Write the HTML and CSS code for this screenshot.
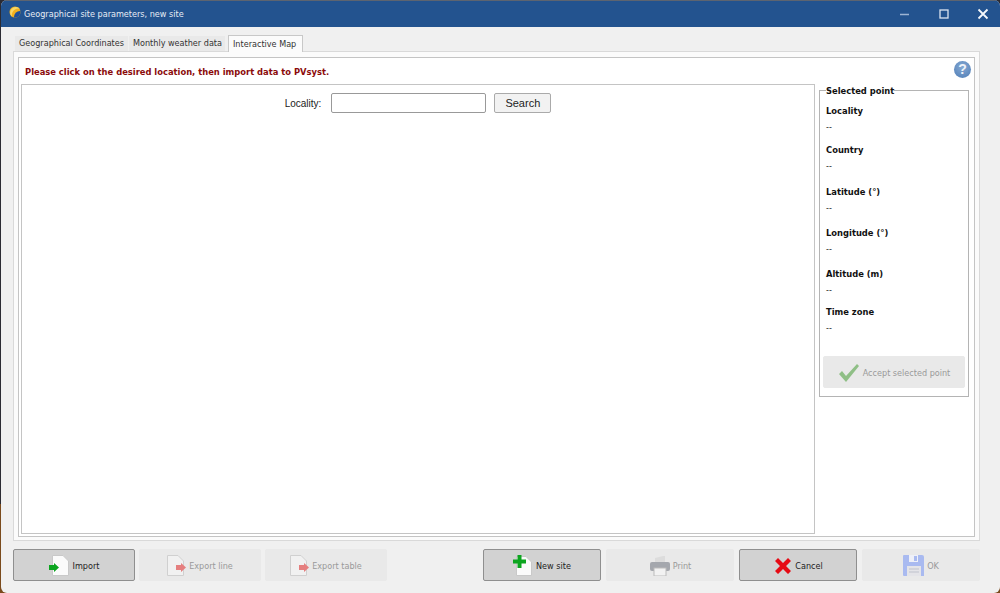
FILE: index.html
```html
<!DOCTYPE html>
<html lang="en">
<head>
  <meta charset="UTF-8" />
  <title>Geographical site parameters, new site</title>
  <link rel="stylesheet" href="styles.css">
</head>
<body>
  <div class="window">

    <header class="titlebar">
      <svg class="app-icon" width="12" height="12" viewBox="0 0 12 12">
        <circle cx="6" cy="6" r="5.5" fill="#f2b01e"/>
        <path d="M3 11 A5.5 5.5 0 0 1 11 2.5 A7 7 0 0 0 3 11 Z" fill="#f7d768"/>
        <path d="M5 11.4 A5.5 5.5 0 0 0 11.4 5 A6 6 0 0 0 5 11.4 Z" fill="#1d4f9c"/>
      </svg>
      <span class="title-text">Geographical site parameters, new site</span>
      <div class="win-controls">
        <svg width="12" height="12" viewBox="0 0 12 12"><path d="M1 6.5H10" stroke="#9db4d3" stroke-width="1.4"/></svg>
        <svg width="12" height="12" viewBox="0 0 12 12"><rect x="2" y="2" width="8" height="8" fill="none" stroke="#dbe4f0" stroke-width="1.3"/></svg>
        <svg width="12" height="12" viewBox="0 0 12 12"><path d="M1.5 1.5L10.5 10.5M10.5 1.5L1.5 10.5" stroke="#f4f7fb" stroke-width="1.8"/></svg>
      </div>
    </header>

    <main class="content">
      <nav class="tabs">
        <div class="tab">Geographical Coordinates</div>
        <div class="tab second">Monthly weather data</div>
        <div class="tab active">Interactive Map</div>
      </nav>

      <section class="tab-panel">
        <div class="inner">
          <div class="notice-row">
            <p class="notice">Please click on the desired location, then import data to PVsyst.</p>
            <div class="help">?</div>
          </div>
          <div class="work">
            <div class="map">
              <div class="search">
                <label class="search-label" for="locality">Locality:</label>
                <input class="search-input" id="locality" type="text">
                <button class="search-btn">Search</button>
              </div>
            </div>
            <fieldset class="point">
              <legend>Selected point</legend>
              <div class="field"><b>Locality</b><span>--</span></div>
              <div class="field tall"><b>Country</b><span>--</span></div>
              <div class="field mid"><b>Latitude (°)</b><span>--</span></div>
              <div class="field mid"><b>Longitude (°)</b><span>--</span></div>
              <div class="field short"><b>Altitude (m)</b><span>--</span></div>
              <div class="field"><b>Time zone</b><span>--</span></div>
              <div class="btn accept disabled">
                <svg width="22" height="20" viewBox="0 0 22 20"><path d="M1 11L4 8L8 13L19 1L21 3L8 19Z" fill="#8fbf86"/></svg>
                Accept selected point
              </div>
            </fieldset>
          </div>
        </div>
      </section>

      <footer class="actions">
        <div class="btn-group left">
          <div class="btn w122">
            <svg width="20" height="21" viewBox="0 0 20 21"><path d="M3.5 0.5H14L19.5 6V20.5H3.5Z" fill="#fbfbfb" stroke="#c9c9c9"/><path d="M0 10H5V8L10 12.5L5 17V15H0Z" fill="#0ca51f"/></svg>
            Import
          </div>
          <div class="btn w122 disabled">
            <svg width="19" height="21" viewBox="0 0 19 21"><path d="M0.5 0.5H11L16.5 6V20.5H0.5Z" fill="#f1f1f1" stroke="#d0d0d0"/><path d="M9 10H14V8L19 12.5L14 17V15H9Z" fill="#e57f7f"/></svg>
            Export line
          </div>
          <div class="btn w122 disabled">
            <svg width="19" height="21" viewBox="0 0 19 21"><path d="M0.5 0.5H11L16.5 6V20.5H0.5Z" fill="#f1f1f1" stroke="#d0d0d0"/><path d="M9 10H14V8L19 12.5L14 17V15H9Z" fill="#e57f7f"/></svg>
            Export table
          </div>
        </div>
        <div class="btn-group right">
          <div class="btn w118">
            <svg width="19" height="21" viewBox="0 0 19 21"><path d="M3.5 1.5H13L18.5 7V20.5H3.5Z" fill="#fbfbfb" stroke="#c9c9c9"/><path d="M4.5 0H8.5V4.5H13V8.5H8.5V13H4.5V8.5H0V4.5H4.5Z" fill="#0ca51f"/></svg>
            New site
          </div>
          <div class="btn w128 print disabled">
            <svg width="20" height="20" viewBox="0 0 20 20"><path d="M5 7V2L13 0H15V7Z" fill="#dcdcdc"/><rect x="0" y="6" width="20" height="9" rx="2" fill="#a4a7ad"/><rect x="4" y="12" width="12" height="8" fill="#f2f2f2" stroke="#bcbcbc"/></svg>
            Print
          </div>
          <div class="btn w118 cancel">
            <svg width="16" height="16" viewBox="0 0 16 16"><path d="M3 0L8 5L13 0L16 3L11 8L16 13L13 16L8 11L3 16L0 13L5 8L0 3Z" fill="#e60a14"/></svg>
            Cancel
          </div>
          <div class="btn w118 ok disabled">
            <svg width="21" height="21" viewBox="0 0 21 21"><path d="M1 0H19A2 2 0 0 1 21 2V21H1A1 1 0 0 1 0 20V1A1 1 0 0 1 1 0Z" fill="#a9baf0"/><rect x="6" y="0" width="9" height="7" fill="#eef0f8"/><rect x="11" y="1" width="3" height="5" fill="#a9baf0"/><rect x="4" y="11" width="14" height="10" fill="#e4e4e8"/><path d="M6 14H16M6 17H16" stroke="#bfc2cc"/></svg>
            OK
          </div>
        </div>
      </footer>
    </main>

  </div>
</body>
</html>
```

FILE: styles.css
```css
html, body {
  margin: 0;
  height: 100%;
}

body {
  background: linear-gradient(#2b2b33 85%, #7a4a1c 85%);
  font-family: 'DejaVu Sans Condensed', 'DejaVu Sans', sans-serif;
  font-size: 9px;
  color: #222;
  overflow: hidden;
}

.window {
  height: 593px;
  margin-left: 1px;
  display: flex;
  flex-direction: column;
  border-radius: 6px;
  overflow: hidden;
  background-color: #f0f0f0;
}

.titlebar {
  height: 27px;
  box-sizing: border-box;
  border-top: 1px solid #5d6470;
  background-color: #23538f;
  color: #e6ecf5;
  display: flex;
  align-items: center;
  padding-left: 8px;
  flex-shrink: 0;
}

.app-icon {
  margin-top: -5px;
  margin-right: 3px;
}

.win-controls {
  margin-left: auto;
  display: flex;
  gap: 27px;
  padding-right: 11px;
}

.content {
  flex: 1;
  display: flex;
  flex-direction: column;
  padding: 7px 20px 12px 12px;
}

.tabs {
  display: flex;
  height: 17px;
  align-items: flex-end;
  padding-left: 2px;
}

.tab {
  height: 15px;
  line-height: 15px;
  padding: 0 4px;
  background-color: #e9e9e9;
  margin-right: 1px;
  color: #333;
}

.tab.second {
  margin-right: 3px;
  padding-right: 3px;
}

.tab.active {
  height: 17px;
  line-height: 16px;
  padding-right: 6px;
  background-color: #fbfbfb;
  border: 1px solid #c8c8c8;
  border-bottom: none;
  margin-right: 0;
  margin-bottom: -1px;
  box-sizing: border-box;
  position: relative;
}

.tab-panel {
  height: 490px;
  box-sizing: border-box;
  border: 1px solid #d9d9d9;
  background-color: #fbfbfb;
  padding: 5px 4px 3px 4px;
}

.inner {
  height: 100%;
  box-sizing: border-box;
  border: 1px solid #c4c4c4;
  background-color: white;
  padding: 0 2px 2px 2px;
  display: flex;
  flex-direction: column;
}

.notice-row {
  height: 26px;
  flex-shrink: 0;
  display: flex;
  align-items: flex-start;
  justify-content: space-between;
}

.notice {
  margin: 8px 0 0 4px;
  color: #8b0b0b;
  font-weight: bold;
  font-size: 9.3px;
}

.help {
  width: 17px;
  height: 17px;
  margin: 3px 1px 0 0;
  border-radius: 50%;
  background: radial-gradient(circle at 50% 35%, #86a9d3, #4f7db6);
  color: #eef3f9;
  font-family: 'Liberation Sans', sans-serif;
  font-weight: bold;
  font-size: 14px;
  line-height: 17px;
  text-align: center;
}

.work {
  flex: 1;
  display: flex;
  gap: 4px;
}

.map {
  width: 794px;
  box-sizing: border-box;
  border: 1px solid #c4c4c4;
  background-color: white;
}

.search {
  display: flex;
  justify-content: center;
  align-items: center;
  gap: 8px;
  height: 20px;
  margin-top: 8px;
  font-family: 'Liberation Sans', sans-serif;
}

.search-label {
  font-size: 10px;
  margin-right: 2px;
}

.search-input {
  width: 155px;
  height: 20px;
  box-sizing: border-box;
  border: 1px solid #999;
  border-radius: 2px;
  background-color: white;
  margin: 0;
}

.search-btn {
  width: 57px;
  height: 20px;
  border: 1px solid #aaa;
  border-radius: 2px;
  background-color: #f2f2f2;
  font-family: inherit;
  font-size: 11px;
  padding: 0;
  color: #222;
}

.point {
  width: 150px;
  height: 312px;
  box-sizing: border-box;
  margin: 1px 0 0 0;
  border: 1px solid #b4b4b4;
  padding: 9px 3px 0 3px;
  min-width: 0;
}

.point legend {
  font-weight: bold;
  font-size: 9.3px;
  padding: 0;
  margin-left: 3px;
  color: #111;
}

.field {
  padding-left: 3px;
  height: 39px;
  display: flex;
  flex-direction: column;
  gap: 4px;
}

.field.short { height: 38px; }
.field.tall { height: 42px; }
.field.mid { height: 41px; }

.field b {
  font-size: 9.3px;
  line-height: 12px;
  color: #111;
}

.field span {
  line-height: 12px;
}

.actions {
  margin-top: 8px;
  display: flex;
  justify-content: space-between;
}

.btn-group {
  display: flex;
}

.btn-group.left { gap: 4px; }
.btn-group.right { gap: 5px; }

.btn {
  height: 32px;
  box-sizing: border-box;
  flex-shrink: 0;
  padding-top: 1px;
  background-color: #d2d2d2;
  border: 1px solid #8f8f8f;
  border-radius: 2px;
  display: flex;
  align-items: center;
  justify-content: center;
  gap: 4px;
  color: #222;
}

.btn.disabled {
  background-color: #e9e9e9;
  border-color: #e9e9e9;
  color: #999;
  gap: 3px;
}

.btn.print {
  padding-left: 1px;
}

.btn.cancel {
  padding-left: 2px;
}

.w122 { width: 122px; }
.w118 { width: 118px; }
.w128 { width: 128px; }

.accept {
  width: 142px;
  margin-top: 11px;
}
```
